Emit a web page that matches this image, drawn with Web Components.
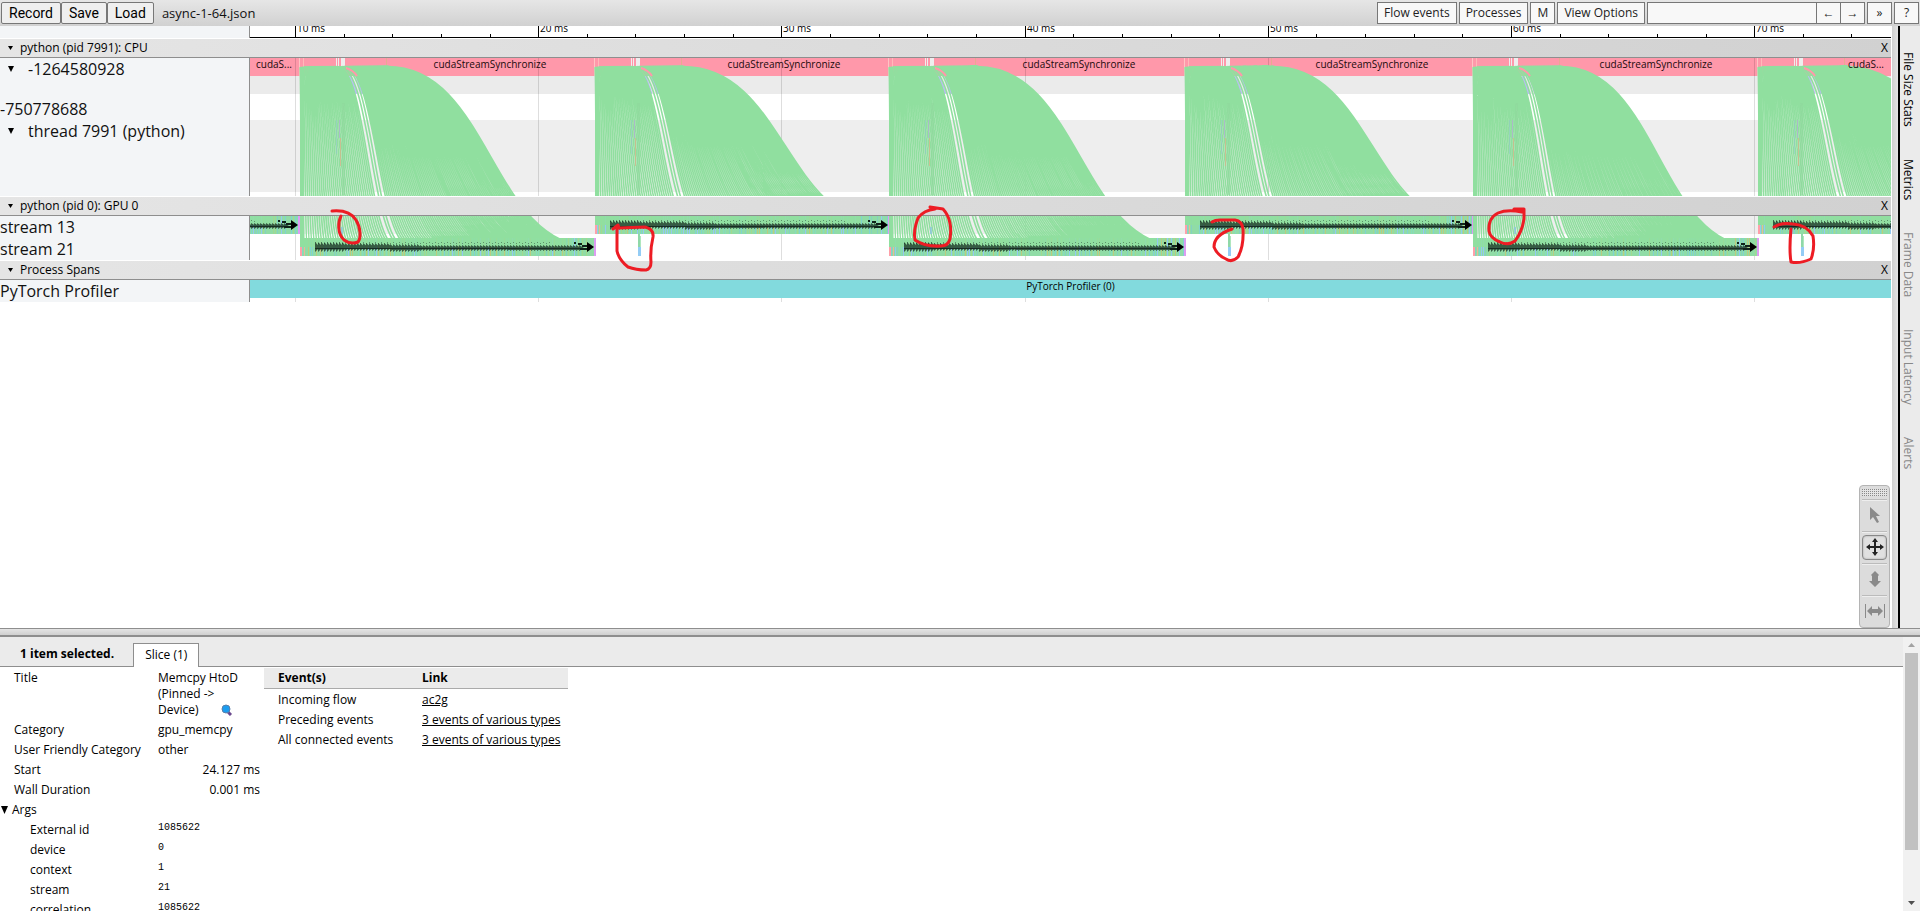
<!DOCTYPE html>
<html lang="en">
<head>
<meta charset="utf-8">
<title>async-1-64.json</title>
<style>
html,body{margin:0;height:100%;overflow:hidden;background:#fff}
body{font:12px/16px "Open Sans","Noto Sans",sans-serif;color:#000}
</style>
</head>
<body>
<trace-viewer></trace-viewer>
<script>
const define = (name, html, setup) => customElements.define(name, class extends HTMLElement {
  constructor() {
    super();
    this.attachShadow({mode: 'open'}).innerHTML = html;
  }
  connectedCallback() { if (setup) setup.call(this, this.shadowRoot); }
});

/* Timeline geometry: x is measured from the left edge of the track area. */
const PX_PER_10MS = 243.2, FIRST_TICK = 45;
const tickX = i => Math.round(FIRST_TICK + i * PX_PER_10MS);
const BURSTS = [
  {s: -245, e: 48, stream: 13},
  {s: 50, e: 344, stream: 21},
  {s: 345, e: 638, stream: 13},
  {s: 639, e: 934, stream: 21},
  {s: 935, e: 1222, stream: 13},
  {s: 1223, e: 1507, stream: 21},
  {s: 1508, e: 1800, stream: 13}
];
const random = seed => () => (seed = (seed * 16807) % 2147483647) / 2147483647;
const rect = (x, y, w, h, c, o = 1) => `<rect x="${x}" y="${y}" width="${w}" height="${h}" fill="${c}" opacity="${o}"/>`;
const gridLines = () => [0,1,2,3,4,5,6].map(i => rect(tickX(i), 0, 1, 400, '#000', .13)).join('');

/* Flow arrows from the launch calls to the kernels; y 0 is the top of the CPU track. */
function flows(b) {
  const n = 108, endY = b.stream === 13 ? 167 : 189;
  let d = '';
  for (let i = 0; i < n; i++) {
    const f = i / (n - 1);
    if (i === 36 || i === 39) continue;
    const x0 = b.s + (i < 38 ? f * 114 : 42 + (f - .35) * 70);
    const x1 = b.s + 2 + f * (b.e - b.s - 2), m = (x0 + x1) / 2;
    d += `M${x0.toFixed(1)} 8.5C${m.toFixed(1)} 8.5 ${m.toFixed(1)} ${endY} ${x1.toFixed(1)} ${endY}`;
  }
  return `<path d="${d}" fill="none" stroke="#90df9f" stroke-width="1.6"/>`;
}
function cpuChart() {
  let o = rect(0,0,3000,18,'#ff98aa') + rect(0,18,3000,18,'#ebebeb') + rect(0,62,3000,72,'#eee') + gridLines();
  for (const b of BURSTS) {
    o += rect(b.s+36,0,1,10,'#eee') + rect(b.s+38,0,1,10,'#eee') + rect(b.s+41,0,4,10,'#eee');
    o += rect(b.s-1,0,1,18,'#ffc4c4') + rect(b.s+3,0,1,10,'#ffb9b9') + rect(b.s+86,0,1,9,'#e6ab92');
    o += `<path d="M${b.s+50} 18l6 18M${b.s+57} 18l6 18" stroke="#b9bdf5" stroke-width="3"/>`;
    o += flows(b);
    o += rect(b.s,9,4,129,'#90df9f') + rect(b.s+4,8,86,10,'#90df9f',.75);
    o += `<path d="M${b.s+46} 10q7 2 11 8" fill="none" stroke="#ff98aa" stroke-width="2"/>`;
    o += rect(b.s+36,62,1,34,'#8fc3cf',.5) + rect(b.s+39,62,1,18,'#b3a9d6',.7) + rect(b.s+40,80,1,28,'#d9b186',.7) + rect(b.s+42,45,3,92,'#90d99d',.6);
  }
  const label = (x, t) => `<text x="${x}" y="10">${t}</text>`;
  o += label(24,'cudaS...') + [240,534,829,1122,1406].map(x => label(x,'cudaStreamSynchronize')).join('') + label(1616,'cudaS...');
  return o;
}
function gpuChart() {
  let o = rect(0,0,3000,18,'#eee') + gridLines();
  const colours = ['#7fd3d0','#bccb7e','#93c8f2','#85dcbc','#a2d98f','#84d2c0'];
  for (const b of BURSTS) {
    const rnd = random(b.s + 700), top = b.stream === 13 ? 0 : 22;
    o += `<g transform="translate(0 -158)">${flows(b)}</g>`;
    o += rect(b.s, top, b.e - b.s, 18, '#90dca6');
    for (let x = b.s + 2; x < b.e; x += 2) if (rnd() < .6) o += rect(x, top, 1, 18, colours[Math.floor(rnd() * 6)]);
    o += rect(b.s, top + 9, 2, 9, '#ff9fa8') + rect(b.s + 4, top + 9, 1, 9, '#e8b59b');
    o += rect(b.s, 0, 4, top + 9, '#90df9f') + rect(b.s + 2, top, (b.e - b.s) * .9, 9, '#90df9f', .85);
    o += rect(b.e, top, 2, 18, '#dd9cf2');
    const y = top + 9;
    let head = '', dots = '';
    for (let x = b.s + 15; x < b.e - 12; x += 3) {
      const f = (x - b.s) / (b.e - b.s), h = f < .15 ? 5 : f < .4 ? 4 : 3, c = y + (f > .3 ? 1 : 0);
      head += `M${x} ${c-h}L${x+5} ${c}L${x} ${c+h}Z`;
      if (f < .85) dots += `M${x} ${y-4-(x%2)}h1v1h-1z`;
    }
    o += `<path d="${head}" fill="#10231a" opacity=".7"/><path d="${dots}" fill="#10231a" opacity=".4"/>`;
    o += rect(b.s + 15, y + 1, b.e - b.s - 20, 1, '#10231a', .8);
    o += `<path d="M${b.e-20} ${y-4}h2M${b.e-16} ${y-3}h4M${b.e-14} ${y+2}h9M${b.e-12} ${y-1}h6" stroke="#10231a" stroke-width="2"/><path d="M${b.e-7} ${y-5}l7 5l-7 5z" fill="#000"/>`;
    if (b.stream === 13) o += rect(b.s+43,18,2,13,'#8fd8a8') + rect(b.s+45,20,1,11,'#aee6bd') + rect(b.s+43,31,3,9,'#93ccf5');
    else o += rect(b.s+41,11,2,7,'#8fc6dd',.8);
  }
  return o;
}

define('trace-toolbar', `<style>
:host{display:flex;align-items:center;height:26px;box-sizing:border-box;padding:0 1px;background:linear-gradient(#e6e6e6,#d1d1d1);font-size:12px;gap:2px}
button,input{box-sizing:border-box;height:22px;margin:0;font:inherit;color:#222;background:#f8f8f8;border:1px solid #777;padding:0 6px;line-height:18px}
.file button{background:#efefef;border-radius:2px;color:#000;font-family:Roboto,sans-serif;font-size:14px;padding:0 7px}
.file,.find{display:flex}
.name{flex:1;padding-left:6px;color:#111;font-size:13px}
.find input{width:170px}
.find button{border-left:0;padding:0;width:24px}
button.sq{width:25px;padding:0}
</style>
<div class="file"><button>Record</button><button>Save</button><button>Load</button></div>
<span class="name">async-1-64.json</span>
<button>Flow events</button><button>Processes</button><button class="sq">M</button><button>View Options</button>
<div class="find"><input type="text" aria-label="Find"><button aria-label="Previous">←</button><button aria-label="Next">→</button></div>
<button class="sq">»</button><button class="sq">?</button>`);

define('trace-ruler', `<style>
:host{display:grid;grid-template-columns:250px 1fr;height:12px}
.pad{background:#f3f5f7;border-right:1px solid #8e8e8e}
svg{display:block;width:100%;height:12px;overflow:hidden;font-size:10px}
</style><div class="pad"></div><svg></svg>`, function (root) {
  let o = rect(0, 11, 3000, 1, '#000');
  for (let i = 0; i < 7; i++) {
    o += rect(tickX(i), 0, 1, 11, '#000') + `<text x="${tickX(i) + 2}" y="6">${(i + 1) * 10} ms</text>`;
    for (let k = 1; k < 5; k++) o += rect(Math.round(FIRST_TICK + (i + k / 5) * PX_PER_10MS), 8, 1, 3, '#000');
  }
  root.querySelector('svg').innerHTML = o;
});

define('trace-process', `<style>
:host{display:block;margin-top:1px}
header{display:flex;align-items:center;height:18px;border-bottom:1px solid #8e8e8e;background:linear-gradient(to right,#e5e5e5,#d1d1d1);padding:0 3px 0 8px;gap:7px}
header span{flex:1}
button{border:0;background:none;padding:0;margin:0;font:inherit;color:#000;display:flex}
.body{display:grid;grid-template-columns:250px 1fr}
.names{background:#f3f5f7;border-right:1px solid #8e8e8e}
.chart{overflow:hidden;display:grid}
</style>
<header><button aria-label="Collapse"><svg width="5" height="4"><path d="M0 0h5L2.500 4z"/></svg></button><span></span><button class="x" aria-label="Close">X</button></header>
<div class="body"><div class="names"><slot name="row"></slot></div><div class="chart"><slot></slot></div></div>`, function (root) {
  root.querySelector('span').textContent = this.getAttribute('label');
});

define('trace-row', `<style>
:host{display:flex;align-items:flex-start;height:22px;font-size:16px;line-height:22px;color:#111;white-space:nowrap}
:host([tall]){height:40px}
:host([deep]){height:76px}
button{display:none;border:0;background:none;margin:0;padding:0 14px 0 8px;height:22px;align-items:center}
:host([open]) button{display:flex}
</style><button aria-label="Collapse thread"><svg width="6" height="6"><path d="M0 0h6L3 6z"/></svg></button><slot></slot>`);

define('trace-chart', `<style>
:host{display:block;height:44px}
:host([kind=cpu]){height:138px}
svg{display:block;width:100%;height:100%;overflow:hidden}
text{font-size:10px;text-anchor:middle;fill:#1a0a0c}
</style><svg></svg>`, function (root) {
  root.querySelector('svg').innerHTML = this.getAttribute('kind') === 'cpu' ? cpuChart() : gpuChart();
});

define('trace-span', `<style>
:host{display:block;height:22px;position:relative}
.bar{height:18px;background:#82dadd;text-align:center;font-size:10px;line-height:13px;position:relative}
svg{position:absolute;inset:0;width:100%;height:22px}
</style><svg></svg><div class="bar"><slot></slot></div>`, function (root) {
  root.querySelector('svg').innerHTML = gridLines();
});

define('trace-marks', `<style>
:host{position:absolute;left:0;top:0;pointer-events:none}
svg{display:block;overflow:visible}
path{fill:none;stroke:#ed1c24;stroke-width:3;stroke-linecap:round;stroke-linejoin:round}
</style><svg width="1" height="1"><g transform="translate(0 -26)">
<path d="M332 211C343 210 351 212 356 220C361 228 361 238 358 242C353 244 348 243 344 240C337 233 338 222 341 216"/>
<path d="M613 229L618 225L619 228L645 227Q654 229 653 237Q650 250 651 262Q651 269 646 270Q636 270 628 267Q619 260 617 251V229"/>
<path d="M930 207L943 209Q953 220 950 239Q948 246 941 246Q925 247 915 240Q913 231 918 218Q924 210 935 209"/>
<path d="M1212 222Q1215 220 1220 220H1235Q1242 221 1243 229Q1244 246 1238 257Q1232 263 1226 259Q1217 255 1214 247Q1214 235 1232 229"/>
<path d="M1514 209L1524 209V219Q1522 232 1515 241Q1508 246 1500 242Q1490 238 1489 231Q1488 218 1498 213Q1507 209 1522 212"/>
<path d="M1774 227Q1782 222 1793 224Q1807 225 1813 236Q1815 249 1811 259Q1800 264 1791 262Q1789 250 1791 229"/>
</g></svg>`);

define('trace-tools', `<style>
:host{position:absolute;right:8px;bottom:0;display:block;width:31px;box-sizing:border-box;background:#dcdcdc;border:1px solid #b4b4b4;border-radius:4px;padding:3px 2px 0}
.grip{height:7px;margin:0 0 3px;background:repeating-linear-gradient(transparent 0 1px,#e4e4e4 1px 2px),repeating-linear-gradient(to right,#888 0 1px,#e4e4e4 1px 2px)}
.cell{border-top:1px solid #bbb;box-shadow:inset 0 1px #eee;height:31px;display:grid;place-items:center}
button{box-sizing:border-box;width:25px;height:25px;padding:0;margin:0;border:1px solid transparent;background:none;border-radius:4px;display:grid;place-items:center;color:#8a8a8a}
.on{border:1px solid #888;background:#e0e0e0;color:#222;box-shadow:inset 0 0 2px #999}
svg{display:block;fill:currentColor}
</style><div class="grip"></div>
<div class="cell"><button aria-label="Select"><svg width="18" height="18"><path d="M4 1v13l3-3l4 6l2-1l-3-6h4z"/></svg></button></div>
<div class="cell"><button class="on" aria-label="Pan"><svg width="18" height="18"><path d="M9 0l3 4h-2v4h4V6l4 3l-4 3v-2h-4v4h2l-3 4l-3-4h2v-4H4v2L0 9l4-3v2h4V4H6z"/></svg></button></div>
<div class="cell"><button aria-label="Zoom"><svg width="18" height="18"><path d="M9 1l4 4l-1 1v5h3l-6 6l-6-6h3V6L5 5z"/></svg></button></div>
<div class="cell"><button aria-label="Timing"><svg width="20" height="18"><path d="M0 2h1v14H0zM19 2h1v14h-1zM2 9l5-5v3h6V4l5 5l-5 5v-3H7v3z"/></svg></button></div>`);

define('trace-sidetabs', `<style>
:host{display:flex;flex-direction:column;box-sizing:border-box;background:#ebebeb;border-left:2px solid #000;width:22px;padding-top:26px;gap:32px;font-size:12px}
button{writing-mode:vertical-rl;border:0;background:none;margin:0;padding:0 4px 0 0;font:inherit;line-height:16px;color:#000;text-align:left}
button:disabled{color:#888}
</style>
<button>File Size Stats</button><button>Metrics</button><button disabled>Frame Data</button><button disabled>Input Latency</button><button disabled>Alerts</button>`);

define('trace-details', `<style>
:host{display:flex;flex-direction:column;height:calc(30vh + 1px);overflow:hidden;background:#fff;position:relative}
.tabs{flex:none;display:flex;align-items:flex-end;height:29px;background:#ebebeb;border-bottom:1px solid #8e8e8e;padding-left:20px;gap:19px}
.tabs b{line-height:24px}
.tabs button{height:24px;margin:0 0 -1px;border:1px solid #8e8e8e;border-bottom:0;background:#fff;font:inherit;color:#000;padding:0 11px}
.tables{display:flex;align-items:flex-start;gap:4px}
table{border-collapse:collapse;table-layout:fixed}
td,th{box-sizing:border-box;padding:2px 0;text-align:left;vertical-align:top;font-weight:400;line-height:16px;white-space:nowrap}
.a{width:260px;margin-top:1px}
.a th{width:158px;padding-left:14px}
.a td{width:102px}
.a .wrap{white-space:normal;padding-right:12px}
.wrap svg{margin-left:22px;vertical-align:-2px}
.a .num{text-align:right}
.a .grp{padding-left:1px}
.grp svg{margin-right:4px}
.a .sub{padding-left:30px}
.raw{font:10px/12px "Liberation Mono",monospace}
.b{width:304px;margin-top:1px}
.b th{background:#ebebeb;font-weight:700;border-bottom:1px solid #aaa}
.b th:first-child,.b td:first-child{padding-left:14px;width:158px}
.b tbody tr:first-child td{padding-top:3px}
a{color:#000}
.bar{position:absolute;right:0;top:0;bottom:0;width:17px;box-sizing:border-box;background:#f1f1f1;display:flex;flex-direction:column;align-items:center}
.bar i{width:13px;height:72%;background:#c1c1c1;margin:0 0 auto}
.bar svg{flex:none;margin:6px 0}
</style>
<div class="tabs"><b>1 item selected.</b><button>Slice (1)</button></div>
<div class="tables">
<table class="a"><tbody>
<tr><th>Title</th><td class="wrap">Memcpy HtoD (Pinned -&gt;<br>Device)<svg width="12" height="12"><path d="M6 7l4 4" stroke="#6b4a8f" stroke-width="3"/><circle cx="5" cy="5" r="4" fill="#1b9df0" stroke="#5b7fa8"/></svg></td></tr>
<tr><th>Category</th><td>gpu_memcpy</td></tr>
<tr><th>User Friendly Category</th><td>other</td></tr>
<tr><th>Start</th><td class="num">24.127 ms</td></tr>
<tr><th>Wall Duration</th><td class="num">0.001 ms</td></tr>
<tr><th class="grp"><svg width="7" height="8"><path d="M0 0h7L3.500 8z"/></svg>Args</th><td></td></tr>
<tr><th class="sub">External id</th><td class="raw">1085622</td></tr>
<tr><th class="sub">device</th><td class="raw">0</td></tr>
<tr><th class="sub">context</th><td class="raw">1</td></tr>
<tr><th class="sub">stream</th><td class="raw">21</td></tr>
<tr><th class="sub">correlation</th><td class="raw">1085622</td></tr>
</tbody></table>
<table class="b"><thead><tr><th>Event(s)</th><th>Link</th></tr></thead><tbody>
<tr><td>Incoming flow</td><td><a href="#ac2g">ac2g</a></td></tr>
<tr><td>Preceding events</td><td><a href="#preceding">3 events of various types</a></td></tr>
<tr><td>All connected events</td><td><a href="#connected">3 events of various types</a></td></tr>
</tbody></table>
</div>
<div class="bar"><svg width="7" height="4"><path d="M0 4h7L3.500 0z" fill="#a3a3a3"/></svg><i></i><svg width="7" height="4"><path d="M0 0h7L3.500 4z" fill="#505050"/></svg></div>`);

define('trace-viewer', `<style>
:host{display:flex;flex-direction:column;height:100vh;overflow:hidden}
main{flex:1;min-height:0;display:flex;position:relative}
.time{flex:1;min-width:0;overflow:hidden}
.grab{width:6px;margin-left:1px;background:linear-gradient(to right,#d0d0d0,#e4e4e4)}
.drag{height:6px;border-top:1px solid #8e8e8e;border-bottom:2px solid #8e8e8e;background:linear-gradient(#e4e4e4,#d0d0d0)}
.area{flex:1;min-width:0;display:flex;position:relative}
</style>
<trace-toolbar></trace-toolbar>
<main>
<div class="area"><div class="time">
<trace-ruler></trace-ruler>
<trace-process label="python (pid 7991): CPU"><trace-row slot="row" open tall>-1264580928</trace-row><trace-row slot="row">-750778688</trace-row><trace-row slot="row" open deep>thread 7991 (python)</trace-row><trace-chart kind="cpu"></trace-chart></trace-process>
<trace-process label="python (pid 0): GPU 0"><trace-row slot="row">stream 13</trace-row><trace-row slot="row">stream 21</trace-row><trace-chart kind="gpu"></trace-chart></trace-process>
<trace-process label="Process Spans"><trace-row slot="row">PyTorch Profiler</trace-row><trace-span>PyTorch Profiler (0)</trace-span></trace-process>
</div>
<div class="grab"></div><trace-tools></trace-tools><trace-marks></trace-marks></div>
<trace-sidetabs></trace-sidetabs>
</main>
<div class="drag"></div>
<trace-details></trace-details>`);
</script>
</body>
</html>
